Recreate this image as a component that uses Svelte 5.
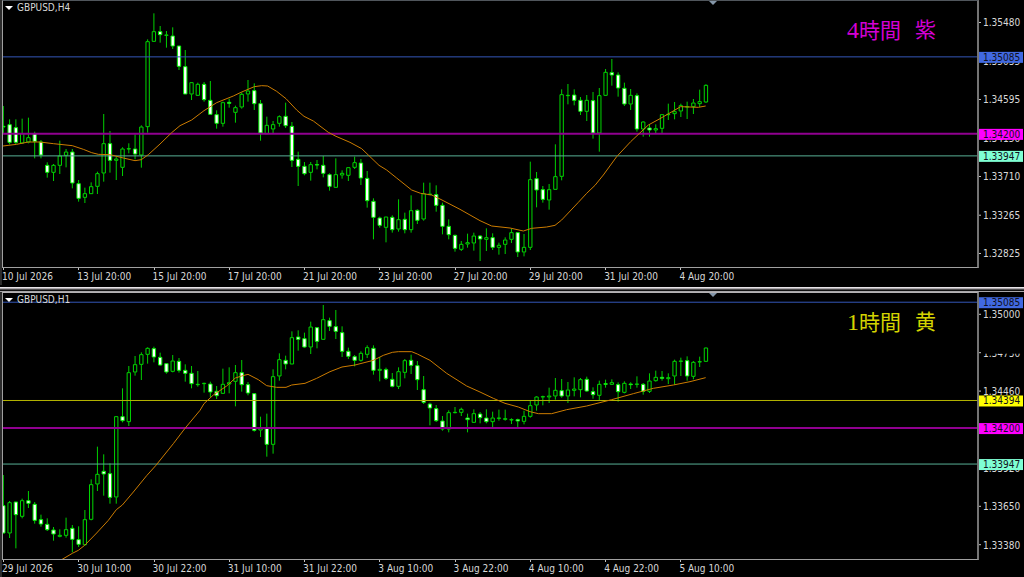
<script lang="ts">
	type Level = { price: number; tag: string; line: string; weight: number };
	type Chart = {
		symbol: string;
		note: [string, string, string];
		noteColor: string;
		max: number;
		span: number;
		origin: number;
		prices: string[];
		times: string[];
		levels: Level[];
		mask?: number;
		candles: string;
		average: string;
	};

	// plot units: three per screen pixel at the default zoom
	const STEP = 18.82;
	const LEFT = 9;
	const WIDTH = 2922;
	const HEIGHT = 804;
	const slot = (STEP * 12 * 100) / (WIDTH + LEFT);

	const blue = { price: 1.35085, tag: '#4169e1', line: '#3457b8', weight: 1 };
	const magenta = { price: 1.342, tag: '#ff00ff', line: '#900090', weight: 2 };
	const aqua = { price: 1.33947, tag: '#7fffd4', line: '#58b096', weight: 1 };
	const yellow = { price: 1.34394, tag: '#ffff00', line: '#b4b400', weight: 1 };

	const charts: Chart[] = [
		{
			symbol: 'GBPUSD,H4',
			note: ['4', '時間', '紫'],
			noteColor: '#d400d4',
			max: 1.357386,
			span: 0.030803,
			origin: 0,
			prices: ['1.35480', '1.35035', '1.34595', '1.34150', '1.33710', '1.33265', '1.32825'],
			times: ['10 Jul 2026', '13 Jul 20:00', '15 Jul 20:00', '17 Jul 20:00', '21 Jul 20:00', '23 Jul 20:00', '27 Jul 20:00', '29 Jul 20:00', '31 Jul 20:00', '4 Aug 20:00'],
			levels: [blue, magenta, aqua],
			// high top bottom low, d = bearish
			candles: `318 378 382 400 d,358 373 428 433 d,358 382 428 433 d,356 400 430 431,353 412 427 430,395 400 425 475 d,
				420 425 466 475 d,487 495 518 533 d,492 495 518 543,422 467 497 522,447 455 467 502,447 455 550 565 d,
				540 550 596 605 d,563 580 593 609,547 559 582 582,515 520 560 582,342 430 520 545,393 430 482 518 d,
				470 476 482 540,442 446 503 528,430 445 446 460,403 446 463 478 d,376 380 466 503,118 124 381 398,
				40 94 125 125,78 94 105 128 d,93 104 107 143,82 107 139 147 d,137 137 200 210 d,150 199 283 283 d,
				247 247 283 300,248 252 287 288,246 252 300 305 d,243 300 344 344 d,331 343 371 386 d,305 307 371 380,
				296 306 311 323 d,317 322 338 368,277 282 322 326,240 272 283 305,250 271 312 330 d,300 310 400 422 d,
				350 375 402 402,363 373 388 402,346 349 371 380,308 348 378 384 d,366 378 482 501 d,455 477 500 558 d,
				486 498 522 526 d,486 493 518 542,480 493 496 508 d,468 495 521 532 d,520 523 560 572 d,475 523 563 563,
				511 519 526 536,502 502 527 543,470 487 503 507,477 488 535 555 d,513 534 603 623 d,595 603 653 718 d,
				650 653 677 683 d,650 650 683 727,646 651 690 698 d,598 658 688 695,638 657 690 700 d,586 631 690 698,
				628 630 662 672 d,548 580 658 662,548 581 585 585,556 583 617 635 d,608 615 680 703 d,658 678 705 718 d,
				704 705 746 755 d,723 732 749 753,701 727 733 743,698 707 730 752,705 707 718 783 d,685 712 719 753,
				700 712 743 750 d,728 735 743 764,712 719 734 762,687 697 719 729,697 697 757 771 d,702 741 757 769,
				485 538 743 750,516 535 571 622 d,558 568 599 608 d,552 568 601 629,433 529 569 569,268 283 530 541,
				252 285 286 313,268 284 302 316 d,291 300 335 345 d,285 300 335 363,276 301 400 416 d,264 286 400 455,
				207 216 287 288,177 217 226 257 d,217 224 265 290 d,248 264 313 318 d,267 285 313 330,280 286 388 395 d,
				363 365 388 410,373 383 391 410 d,373 385 391 402,342 343 386 402,311 342 344 360,306 334 342 358,
				311 316 334 351,305 319 321 357,297 308 321 342,269 304 312 321,253 255 307 309`,
			average:
				'9,438 50,433 85,426 120,426 160,431 217,437 250,448 275,458 295,463 330,464 370,474 405,482 424,479 445,464 480,432 515,398 540,377 575,360 612,332 650,308 700,288 725,276 763,260 785,257 803,258 830,274 858,296 890,330 912,349 940,363 985,397 1008,409 1050,427 1085,446 1110,470 1137,496 1160,510 1190,534 1235,570 1262,580 1295,585 1320,597 1380,628 1440,662 1475,678 1530,684 1570,693 1595,685 1640,681 1665,676 1685,660 1735,607 1760,580 1785,556 1810,525 1850,470 1892,425 1945,375 1980,356 2042,320 2095,322 2117,318'
		},
		{
			symbol: 'GBPUSD,H1',
			note: ['1', '時間', '黄'],
			noteColor: '#d4d400',
			max: 1.351568,
			span: 0.018844,
			origin: 21,
			prices: ['1.35000', '1.34730', '1.34460', '1.34190', '1.33920', '1.33650', '1.33380'],
			times: ['29 Jul 2026', '30 Jul 10:00', '30 Jul 22:00', '31 Jul 10:00', '31 Jul 22:00', '3 Aug 10:00', '3 Aug 22:00', '4 Aug 10:00', '4 Aug 22:00', '5 Aug 10:00'],
			levels: [blue, yellow, magenta, aqua],
			mask: 1.3473,
			candles: `570 661 745 746 d,648 652 745 759,650 650 690 790 d,641 646 695 700,618 646 656 669 d,651 657 707 716 d,
				689 703 718 725 d,700 717 735 738 d,726 734 748 767 d,733 750 755 757,698 733 752 758,720 729 764 802 d,
				724 763 779 786 d,675 703 780 782,583 598 704 706,485 567 598 618,508 558 568 632 d,535 565 638 656 d,
				393 394 637 656,310 394 408 412 d,243 262 411 423,213 238 262 272,202 208 239 285,187 189 209 236,
				185 190 217 232 d,203 216 241 243 d,235 235 262 266 d,210 227 260 262,219 228 257 263 d,238 255 266 290 d,
				243 264 297 310 d,258 297 300 305,293 294 297 323,290 296 322 336 d,303 318 333 342 d,251 297 326 327,
				247 292 298 325,240 262 290 364,225 262 300 320 d,291 298 325 331 d,325 325 437 440 d,395 429 436 456,
				386 427 479 515 d,253 274 479 506,205 223 274 287,212 225 238 253 d,139 157 238 238,136 155 164 197 d,
				143 160 187 189 d,110 125 187 207,126 127 170 190 d,60 103 164 164,98 106 125 138 d,75 124 140 162 d,
				124 142 200 216 d,188 198 215 222 d,210 214 227 244 d,199 204 227 230,181 187 209 219,181 189 257 269 d,
				216 252 257 289,248 253 281 285 d,264 282 305 307 d,247 259 305 312,222 226 263 280,209 225 242 267 d,
				228 241 285 315 d,273 313 353 357 d,353 356 370 421 d,360 370 408 411 d,393 407 433 437 d,376 382 433 442,
				366 381 383 385,368 372 383 393,386 398 405 442 d,373 385 413 414,381 386 399 415 d,373 398 411 415 d,
				380 398 411 428,374 398 400 407,374 400 404 407,400 403 405 417,401 403 409 432 d,377 393 410 418,
				347 361 395 398,333 335 361 377,332 334 337 361,308 332 337 354,279 315 334 344,282 316 334 338 d,
				291 314 334 354,277 311 317 334,279 283 315 337,275 282 319 321 d,307 319 330 341 d,287 297 332 347,
				284 295 299 308 d,283 292 299 300,292 298 321 350 d,289 294 323 325,292 296 300 312 d,274 296 299 308,
				294 297 320 329 d,265 287 320 324,257 276 288 290,258 276 281 287 d,265 277 282 297,224 228 274 299,
				218 227 229 273,214 226 274 287 d,228 231 275 283,215 229 232 246,187 188 230 231`,
			average:
				'185,824 217,805 235,796 254,781 290,744 325,706 349,674 367,660 400,621 440,572 467,542 520,476 555,430 600,376 612,356 640,330 680,303 706,279 725,273 744,268 775,284 800,302 830,307 858,307 875,300 915,295 950,280 990,260 1026,246 1065,240 1120,226 1150,211 1177,202 1195,200 1235,200 1252,207 1290,226 1340,265 1400,303 1440,321 1480,340 1515,355 1555,366 1590,380 1615,386 1655,386 1700,374 1760,363 1835,344 1900,326 1960,310 2020,300 2070,290 2117,278'
		}
	];

	function parse(candles: string) {
		return candles.split(',').map((row, i) => {
			const [high, top, bottom, low, dir] = row.trim().split(' ');
			return { x: LEFT + 1 + i * STEP, high: +high, top: +top, bottom: +bottom, low: +low, down: dir === 'd' };
		});
	}

	function frac(chart: Chart, price: number) {
		return (chart.max - price) / chart.span;
	}
</script>

<main>
	{#each charts as chart, n}
		{#if n > 0}
			<div class="splitter"></div>
		{/if}
		<section class="chart" aria-label={chart.symbol}>
			<div class="plot">
				<svg class="canvas" viewBox="{LEFT} {chart.origin + 3} {WIDTH} {HEIGHT - 6}" preserveAspectRatio="none">
					<polygon class="shift" points="2124,{chart.origin} 2154,{chart.origin} 2139,{chart.origin + 15}" />
					{#each parse(chart.candles) as c}
						<g class:down={c.down}>
							<line class="wick" x1={c.x} x2={c.x} y1={c.high} y2={c.top} />
							<line class="wick" x1={c.x} x2={c.x} y1={c.bottom} y2={c.low} />
							<rect class="body" x={c.x - 5} y={c.top + 1} width="10" height={Math.max(c.bottom - c.top - 2, 1)} />
						</g>
					{/each}
					{#each chart.levels as level}
						{@const y = chart.origin + frac(chart, level.price) * HEIGHT}
						<line class="level" x1="0" x2={WIDTH + LEFT} y1={y} y2={y} stroke={level.line} stroke-width={level.weight} />
					{/each}
					<polyline class="average" points={chart.average} />
				</svg>
				<header>
					<h2>
						<svg class="arrow" viewBox="0 0 8 4"><path d="M0 0h8L4 4z" /></svg>
						{chart.symbol}
					</h2>
					<p class="note" style="color: {chart.noteColor}">
						<span><span class="digit">{chart.note[0]}</span>{chart.note[1]}</span>
						<span>{chart.note[2]}</span>
					</p>
				</header>
			</div>
			<svg class="scale">
				{#each chart.prices as price}
					<svg y="{frac(chart, +price) * 100}%">
						<line class="tick" x1="0" x2="2" y1="0" y2="0" />
						<text x="4" y="4">{price}</text>
					</svg>
				{/each}
				{#if chart.mask}
					<svg y="{frac(chart, chart.mask) * 100}%">
						<rect x="3" y="-6" width="42" height="7" />
					</svg>
				{/if}
				{#each chart.levels as level}
					<svg y="{frac(chart, level.price) * 100}%">
						<rect y="-5" width="44" height="11" fill={level.tag} />
						<text class="tagged" x="4" y="4">{level.price.toFixed(5)}</text>
					</svg>
				{/each}
			</svg>
			<ol class="times">
				{#each chart.times as time}
					<li style="width: {slot}%">{time}</li>
				{/each}
			</ol>
		</section>
	{/each}
</main>

<style>
	:global(body) {
		margin: 0;
		background: #000;
	}
	main {
		display: grid;
		grid-template-rows: minmax(200px, 1fr) 7px minmax(200px, 1fr);
		height: 100vh;
		background: #000;
		color: #d8d8d8;
		font: 10px/17px 'DejaVu Sans Condensed', 'Noto Sans', sans-serif;
	}
	.splitter {
		background: linear-gradient(#000 2px, #e8e4e8 2px, #e8e4e8 3px, #a8a4a8 3px, #a8a4a8 4px, #4c4a4c 4px, #4c4a4c 5px, #101010 5px, #101010 6px, #a8a6a8 6px);
	}
	.chart {
		display: grid;
		grid-template: minmax(0, 1fr) 17px / minmax(0, 1fr) 45px;
		border-left: 2px solid #2c2c2c;
		min-height: 0;
	}
	.plot {
		display: grid;
		grid-template: minmax(0, 1fr) / minmax(0, 1fr);
		border: 1px solid #a0a0a0;
		border-top-color: #50565c;
		border-right: 2px solid #747474;
	}
	.splitter + .chart .plot {
		border-top-color: #b4b2b4;
	}
	.canvas,
	header {
		grid-area: 1 / 1;
		width: 100%;
		height: 100%;
	}
	header {
		display: flex;
		justify-content: space-between;
		align-items: flex-start;
		box-sizing: border-box;
		padding: 0 41px 0 2px;
	}
	h2 {
		display: flex;
		align-items: center;
		gap: 4px;
		margin: 0;
		font-size: 10px;
		line-height: 14px;
		font-weight: 400;
	}
	.arrow {
		width: 8px;
		height: 4px;
		fill: #fff;
	}
	.note {
		display: flex;
		gap: 14px;
		margin: 14px 0 0;
		font-family: 'Liberation Serif', 'Noto Sans CJK JP', serif;
		font-size: 21px;
		line-height: 30px;
	}
	.digit {
		font-size: 24px;
	}
	.shift {
		fill: #8496a8;
	}
	.wick,
	.level,
	.body,
	.average {
		vector-effect: non-scaling-stroke;
	}
	.wick {
		stroke: #00d000;
		stroke-width: 1px;
	}
	.body {
		fill: #000;
		stroke: #00d800;
		stroke-width: 1px;
	}
	.down .body {
		fill: #fff;
		stroke: #00f000;
	}
	.average {
		fill: none;
		stroke: #cc7c00;
		stroke-width: 1px;
	}
	.scale {
		width: 100%;
		height: 100%;
	}
	.scale svg {
		overflow: visible;
	}
	.scale text {
		fill: #d8d8d8;
	}
	.scale .tagged {
		fill: #101020;
	}
	.tick {
		stroke: #c0c0c0;
		stroke-width: 1px;
	}
	.times {
		display: flex;
		margin: 0;
		padding: 0;
		list-style: none;
	}
	.times li {
		flex: none;
		white-space: nowrap;
		background: linear-gradient(#c0c0c0, #c0c0c0) 1px 0 / 1px 2px no-repeat;
	}
</style>
